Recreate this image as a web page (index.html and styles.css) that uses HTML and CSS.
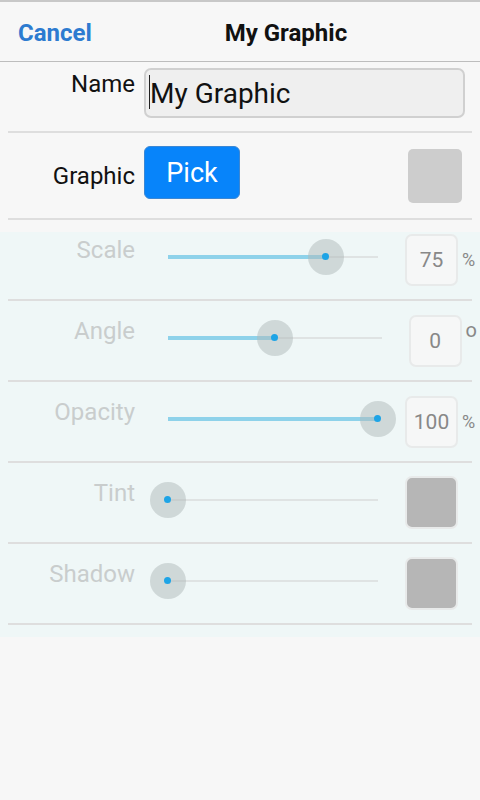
FILE: index.html
```html
<!DOCTYPE html>
<html lang="en">
<head>
    <meta charset="UTF-8">
    <meta name="viewport" content="width=device-width, initial-scale=1.0">
    <title>My Graphic</title>
    <link rel="stylesheet" href="styles.css">
</head>
<body>
    <div class="topbar">
        <a class="cancel-btn" href="#">Cancel</a>
        <div class="topbar-title">My Graphic</div>
    </div>

    <div class="form-row name-row">
        <label class="row-label" for="graphicName">Name</label>
        <div class="field">
            <input type="text" class="text-input" id="graphicName" value="My Graphic">
        </div>
    </div>
    <div class="rule"></div>

    <div class="form-row graphic-row">
        <div class="row-label">Graphic</div>
        <button class="pick-btn">Pick</button>
        <div class="preview"></div>
    </div>
    <div class="rule"></div>

    <div class="adjust-group">
        <div class="adjust-row first">
            <div class="adjust-label">Scale</div>
            <div class="slider">
                <div class="track">
                    <div class="fill" style="width: 75%"></div>
                    <div class="thumb" style="left: 75%"></div>
                </div>
            </div>
            <div class="value-box">75</div>
            <div class="unit">%</div>
        </div>
        <div class="rule"></div>

        <div class="adjust-row">
            <div class="adjust-label">Angle</div>
            <div class="slider">
                <div class="track">
                    <div class="fill" style="width: 50%"></div>
                    <div class="thumb" style="left: 50%"></div>
                </div>
            </div>
            <div class="value-box">0</div>
            <div class="unit degree">o</div>
        </div>
        <div class="rule"></div>

        <div class="adjust-row">
            <div class="adjust-label">Opacity</div>
            <div class="slider">
                <div class="track">
                    <div class="fill" style="width: 100%"></div>
                    <div class="thumb" style="left: 100%"></div>
                </div>
            </div>
            <div class="value-box">100</div>
            <div class="unit">%</div>
        </div>
        <div class="rule"></div>

        <div class="adjust-row">
            <div class="adjust-label">Tint</div>
            <div class="slider">
                <div class="track">
                    <div class="fill" style="width: 0%"></div>
                    <div class="thumb" style="left: 0%"></div>
                </div>
            </div>
            <div class="swatch"></div>
            <div class="unit"></div>
        </div>
        <div class="rule"></div>

        <div class="adjust-row">
            <div class="adjust-label">Shadow</div>
            <div class="slider">
                <div class="track">
                    <div class="fill" style="width: 0%"></div>
                    <div class="thumb" style="left: 0%"></div>
                </div>
            </div>
            <div class="swatch"></div>
            <div class="unit"></div>
        </div>
        <div class="rule"></div>
    </div>
</body>
</html>
```

FILE: styles.css
```css
* {
    margin: 0;
    padding: 0;
    box-sizing: border-box;
}

body {
    font-family: Roboto, "Open Sans", sans-serif;
    background: #f7f7f7;
    color: #111;
    min-height: 100vh;
}

/* top bar */
.topbar {
    height: 62px;
    display: flex;
    align-items: center;
    padding-top: 3px;
    border-top: 2px solid #c8c8c8;
    border-bottom: 1px solid #bdbdbd;
}

.cancel-btn {
    padding-left: 18px;
    font-size: 24px;
    font-weight: bold;
    color: #2d7bd0;
    text-decoration: none;
}

.topbar-title {
    flex: 1;
    text-align: center;
    font-size: 24px;
    font-weight: bold;
    color: #111;
}

.rule {
    height: 2px;
    margin: 0 8px;
    background: #dedede;
}

/* name / graphic rows */
.form-row {
    display: flex;
    padding: 0 3px 0 8px;
}

.row-label {
    width: 127px;
    flex-shrink: 0;
    text-align: right;
    font-size: 24px;
    color: #111;
}

.name-row {
    height: 69px;
    align-items: flex-start;
    padding-top: 6px;
}

.name-row .row-label {
    margin-top: 2px;
}

.field {
    flex: 1;
    position: relative;
    margin: 0 12px 0 9px;
}

/* caret sitting at the start of the text */
.field::before {
    content: "";
    position: absolute;
    left: 5px;
    top: 7px;
    width: 1px;
    height: 34px;
    background: #222;
}

.text-input {
    width: 100%;
    height: 50px;
    padding: 0 4px;
    background: #efefef;
    border: 2px solid #d0d0d0;
    border-radius: 7px;
    font-family: Roboto, "Open Sans", sans-serif;
    font-size: 28px;
    color: #111;
    outline: none;
}

.graphic-row {
    height: 85px;
    align-items: center;
}

.pick-btn {
    width: 96px;
    height: 53px;
    margin-left: 9px;
    margin-top: -6px;
    background: #0784fa;
    border: 1px solid #3b87d4;
    border-radius: 6px;
    color: #fff;
    font-family: Roboto, "Open Sans", sans-serif;
    font-size: 27px;
    cursor: pointer;
}

.preview {
    width: 54px;
    height: 54px;
    margin-left: auto;
    margin-right: 15px;
    background: #cdcdcd;
    border-radius: 5px;
}

/* adjustment sliders */
.adjust-group {
    display: flex;
    flex-direction: column;
    margin-top: 12px;
    padding-bottom: 12px;
    background: #eff7f7;
}

.adjust-row {
    height: 79px;
    display: flex;
    align-items: center;
    padding: 0 3px 0 8px;
}

.adjust-row.first {
    margin-top: -12px;
}

.adjust-label {
    width: 127px;
    flex-shrink: 0;
    align-self: flex-start;
    padding-top: 16px;
    text-align: right;
    font-size: 24px;
    color: #c9cdcd;
}

.slider {
    flex: 1;
    padding: 0 18px;
    margin: 0 9px 6px 15px;
}

.track {
    position: relative;
    height: 2px;
    background: #dfe3e3;
}

.fill {
    position: absolute;
    left: 0;
    top: -1px;
    height: 4px;
    background: #8ed2ea;
}

.thumb {
    position: absolute;
    top: -17px;
    width: 36px;
    height: 36px;
    margin-left: -18px;
    border-radius: 50%;
    background: rgba(175, 185, 185, 0.5);
}

.thumb::after {
    content: "";
    position: absolute;
    left: 14px;
    top: 14px;
    width: 7px;
    height: 7px;
    border-radius: 50%;
    background: #1ea4e6;
}

.value-box {
    width: 53px;
    height: 52px;
    display: flex;
    align-items: center;
    justify-content: center;
    background: #f6f7f7;
    border: 2px solid #e8eaea;
    border-radius: 7px;
    font-size: 21px;
    color: #888;
}

.swatch {
    width: 53px;
    height: 53px;
    background: #b6b6b6;
    border: 2px solid #e8eaea;
    border-radius: 7px;
}

.unit {
    min-width: 15px;
    margin-left: 4px;
    font-size: 18px;
    color: #888;
}

.unit.degree {
    min-width: 10px;
    align-self: flex-start;
    margin-top: 17px;
    font-size: 20px;
}
```
